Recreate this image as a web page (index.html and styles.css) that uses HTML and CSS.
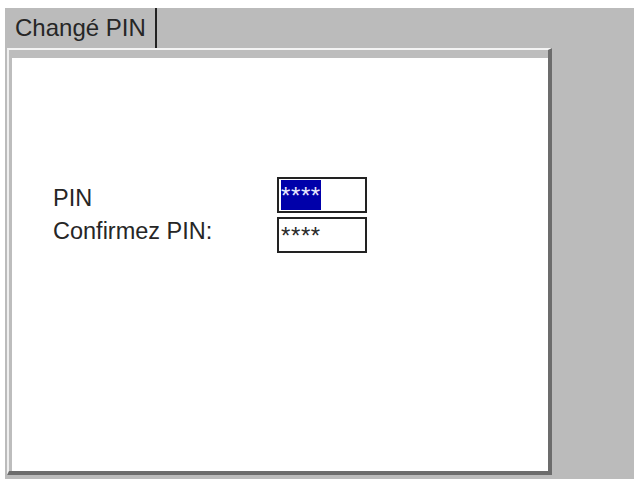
FILE: index.html
```html
<!DOCTYPE html>
<html lang="fr">
<head>
<meta charset="utf-8">
<title>Changé PIN</title>
<link rel="stylesheet" href="styles.css">
</head>
<body>
<div class="screen">
  <div class="tabs">
    <div class="tab">Changé PIN</div>
  </div>
  <div class="panel">
    <div class="content">
      <div class="form">
        <div class="labels">
          <div class="label">PIN</div>
          <div class="label">Confirmez PIN:</div>
        </div>
        <div class="fields">
          <div class="field"><span class="value selected">****</span></div>
          <div class="field"><span class="value">****</span></div>
        </div>
      </div>
    </div>
  </div>
</div>
</body>
</html>
```

FILE: styles.css
```css
html, body {
  margin: 0;
  padding: 0;
  background: #ffffff;
}

body {
  width: 634px;
  height: 479px;
  overflow: hidden;
  font-family: "Liberation Sans", Arial, sans-serif;
  color: #262626;
}

.screen {
  margin: 8px 0 0 5px;
  height: 471px;
  background: #bbbbbb;
}

.tabs {
  display: flex;
  height: 40px;
}

.tab {
  box-sizing: border-box;
  width: 152px;
  height: 40px;
  padding-left: 10px;
  border-right: 2px solid #222222;
  font-size: 24px;
  line-height: 40px;
  white-space: nowrap;
}

.panel {
  box-sizing: border-box;
  margin-left: 2px;
  width: 545px;
  height: 427px;
  padding: 8px 0 0 3px;
  background: #bdbdbd;
  border-top: 2px solid #f4f4f4;
  border-left: 2px solid #efefef;
  border-right: 4px solid #6c6c6c;
  border-bottom: 4px solid #6c6c6c;
  display: flex;
}

.content {
  flex: 1;
  background: #ffffff;
  padding-top: 119px;
}

.form {
  display: flex;
  align-items: flex-start;
}

.labels {
  margin: 5px 0 0 41px;
  width: 224px;
  font-size: 23.5px;
  line-height: 33px;
  white-space: nowrap;
}

.fields {
  display: flex;
  flex-direction: column;
  gap: 4px;
}

.field {
  box-sizing: border-box;
  width: 90px;
  height: 36px;
  border: 2px solid #222222;
  padding: 1px 1px 1px 2px;
  background: #ffffff;
  display: flex;
}

.value {
  display: block;
  width: 40px;
  height: 30px;
  font-size: 24px;
  line-height: 31px;
  letter-spacing: 0.6px;
  color: #2a2a2a;
  white-space: nowrap;
  overflow: hidden;
}

.value.selected {
  background: #0000aa;
  color: #e8e8ff;
}
```
